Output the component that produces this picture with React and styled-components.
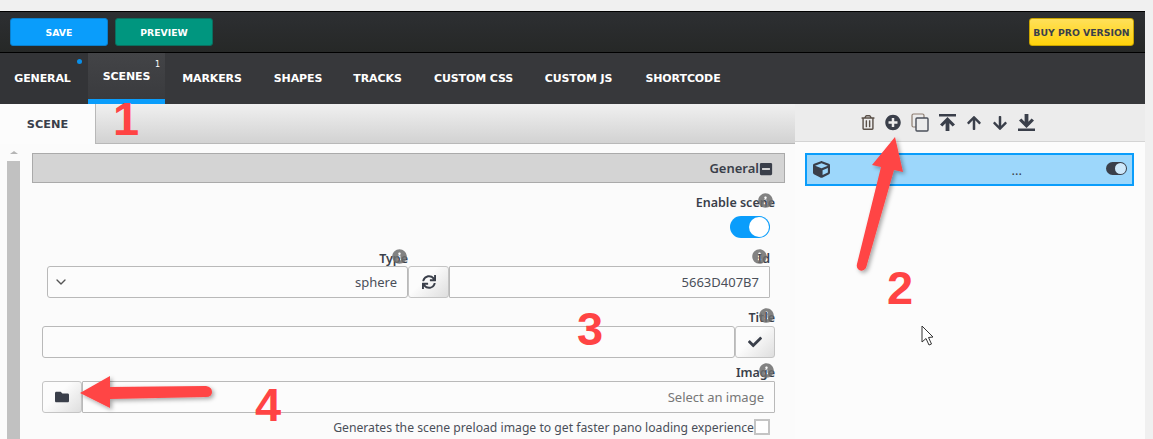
import React from "react";
import styled, { createGlobalStyle } from "styled-components";
import {
  FaRegTrashAlt,
  FaPlusCircle,
  FaArrowUp,
  FaArrowDown,
  FaCube,
  FaSync,
  FaCheck,
  FaFolder,
  FaInfoCircle,
  FaMinusSquare,
} from "react-icons/fa";
import { ChevronDown } from "lucide-react";

const Global = createGlobalStyle`
  html, body { margin: 0; padding: 0; background: #f0f0f0; height: 439px; overflow: hidden; }
  * { box-sizing: border-box; }
`;

const Page = styled.div`
  position: relative;
  width: 1153px;
  height: 439px;
  overflow: hidden;
  padding-top: 11px;
  font-family: "Noto Sans", sans-serif;
  color: #3a3f4a;
`;

const Frame = styled.div`
  width: 1145px;
`;

const TopBar = styled.div`
  height: 42px;
  display: flex;
  align-items: center;
  gap: 7px;
  padding: 0 11px 0 10px;
  background: linear-gradient(#2d2f32, #262827);
  border-top: 1px solid #000;
  border-bottom: 1px solid #000;
`;

const ActionButton = styled.div`
  width: ${(p) => p.$width || 98}px;
  height: 28px;
  display: flex;
  align-items: center;
  justify-content: center;
  border-radius: 3px;
  border: 1px solid ${(p) => p.$edge};
  background: ${(p) => p.$bg};
  color: ${(p) => p.$ink || "#fff"};
  font-family: "DejaVu Sans", sans-serif;
  font-weight: 700;
  font-size: 9.3px;
  margin-left: ${(p) => (p.$push ? "auto" : 0)};
`;

const Nav = styled.div`
  height: 51px;
  display: flex;
  background: #37383b;
`;

const NavTab = styled.div`
  position: relative;
  width: ${(p) => p.$width}px;
  height: 51px;
  padding-right: ${(p) => p.$shift || 0}px;
  display: flex;
  align-items: center;
  justify-content: center;
  color: #fff;
  font-family: "DejaVu Sans", sans-serif;
  font-weight: 700;
  font-size: 11px;
  letter-spacing: -0.1px;
  background: ${(p) => (p.$active ? "linear-gradient(#434447, #3a3b3e)" : p.$tone || "transparent")};
  border-bottom: ${(p) => (p.$active ? "5px solid #0a9dfb" : "none")};
`;

const Dot = styled.span`
  position: absolute;
  top: 6px;
  right: 6px;
  width: 5px;
  height: 5px;
  border-radius: 50%;
  background: #0a8fe8;
`;

const Count = styled.span`
  position: absolute;
  top: 7px;
  right: 5px;
  font-size: 8px;
  font-weight: 400;
`;

const Workspace = styled.div`
  display: flex;
  height: 335px;
`;

const LeftPane = styled.div`
  width: 795px;
  background: #fbfbfb;
`;

const TabRow = styled.div`
  height: 40px;
  display: flex;
`;

const SceneTab = styled.div`
  width: 96px;
  display: flex;
  align-items: center;
  justify-content: center;
  background: #fcfcfc;
  border-right: 1px solid #b8b8b8;
  font-family: "DejaVu Sans", sans-serif;
  font-weight: 700;
  font-size: 11.3px;
  color: #3a3f4a;
`;

const TabFiller = styled.div`
  flex: 1;
  background: linear-gradient(#f0f0f0, #d2d2d2);
  border-bottom: 1px solid #b8b8b8;
`;

const PaneBody = styled.div`
  display: flex;
  padding-left: 7px;
`;

const ScrollTrack = styled.div`
  width: 13px;
  flex: none;
  display: flex;
  flex-direction: column;
  align-items: center;
`;

const ScrollArrow = styled.div`
  height: 17px;
  padding-top: 7px;
  &::before {
    content: "";
    display: block;
    border-left: 4px solid transparent;
    border-right: 4px solid transparent;
    border-bottom: 3px solid #b5b5b5;
  }
`;

const ScrollThumb = styled.div`
  width: 13px;
  height: 280px;
  background: #c1c1c1;
`;

const FormColumn = styled.div`
  width: 753px;
  margin-left: 12px;
  padding-top: 9px;
`;

const SectionHead = styled.div`
  height: 30px;
  display: flex;
  align-items: center;
  justify-content: flex-end;
  padding-right: 11px;
  background: #d4d4d4;
  border: 1px solid #aaa;
  font-size: 13px;
  font-weight: 600;
  color: #3a3f4a;
  svg {
    width: 14px;
    height: 14px;
    color: #3a3f4a;
    margin-top: 1px;
  }
`;

const FieldLabel = styled.div`
  position: relative;
  height: ${(p) => p.$height || 20}px;
  padding-right: ${(p) => p.$inset || 0}px;
  text-align: right;
  font-size: 12.5px;
  font-weight: 600;
  line-height: 17px;
  color: #3a3f4a;
`;

const Info = styled(FaInfoCircle)`
  position: absolute;
  top: -1px;
  right: ${(p) => p.$right}px;
  width: 15px;
  height: 15px;
  color: #6e6e6e;
  opacity: 0.85;
`;

const EnableBlock = styled.div`
  padding: 11px 10px 0 0;
`;

const Toggle = styled.div`
  position: relative;
  width: 40px;
  height: 22px;
  margin: 5px 5px 0 auto;
  border-radius: 11px;
  background: #0a9dfb;
  &::after {
    content: "";
    position: absolute;
    top: 1px;
    right: 1px;
    width: 20px;
    height: 20px;
    border-radius: 50%;
    background: #fff;
  }
`;

const TwoCol = styled.div`
  display: grid;
  grid-template-columns: 402px 321px;
  margin: 12px 0 0 15px;
`;

const Row = styled.div`
  display: flex;
  height: 32px;
`;

const Control = styled.div`
  flex: 1;
  display: flex;
  align-items: center;
  justify-content: ${(p) => (p.$between ? "space-between" : "flex-end")};
  padding: 0 ${(p) => p.$end || 10}px 0 ${(p) => p.$start || 10}px;
  background: #fcfcfc;
  border: 1px solid #b9b9b9;
  border-radius: ${(p) => (p.$round ? 3 : 1)}px;
  font-size: 13px;
  color: ${(p) => p.$ink || "#4a4f59"};
  svg {
    color: #555;
  }
`;

const IconButton = styled.div`
  width: ${(p) => p.$width || 40}px;
  flex: none;
  display: flex;
  align-items: center;
  justify-content: center;
  background: linear-gradient(135deg, #fcfcfc 40%, #dedede);
  border: 1px solid #c4c4c4;
  border-radius: 3px;
  color: #3a3f4a;
  svg {
    width: 14px;
    height: 14px;
  }
`;

const FullRow = styled.div`
  margin: 0 10px;
`;

const TitleRow = styled(FullRow)`
  margin-top: 11px;
`;

const ImageRow = styled(FullRow)`
  margin-top: 6px;
`;

const Hint = styled.div`
  display: flex;
  justify-content: flex-end;
  align-items: center;
  height: 22px;
  margin-top: 3px;
  padding-right: 15px;
  font-size: 12.2px;
  color: #4a4f59;
`;

const Check = styled.span`
  width: 16px;
  height: 16px;
  background: #fff;
  border: 2px solid #c4c4c4;
`;

const RightPane = styled.div`
  flex: 1;
  background: #fcfcfc;
`;

const Tools = styled.div`
  height: 38px;
  display: flex;
  align-items: center;
  padding-left: 66px;
  gap: 10px;
  background: #ececec;
  border-bottom: 1px solid #d4d4d4;
  color: #3a3f4a;
`;

const ToolIcon = styled.span`
  display: flex;
  width: ${(p) => p.$w || 17}px;
  justify-content: center;
  color: ${(p) => p.$ink || "#3a3f4a"};
  svg {
    display: block;
  }
`;

const SceneItem = styled.div`
  height: 33px;
  margin: 11px 11px 0 10px;
  display: flex;
  align-items: center;
  padding: 0 5px 0 6px;
  background: #9dd7fb;
  border: 2px solid #0a9dfb;
  color: #3a3f4a;
  font-size: 13px;
`;

const Dots = styled.span`
  margin: 0 84px 0 auto;
`;

const MiniToggle = styled.div`
  position: relative;
  width: 21px;
  height: 13px;
  margin-top: -2px;
  border-radius: 7px;
  background: #3a3f4a;
  &::after {
    content: "";
    position: absolute;
    top: 1px;
    right: 1px;
    width: 11px;
    height: 11px;
    border-radius: 50%;
    background: #cfe9fb;
  }
`;

const Callout = styled.span`
  position: absolute;
  left: ${(p) => p.$x}px;
  top: ${(p) => p.$y}px;
  font-family: "Liberation Sans", sans-serif;
  font-weight: 700;
  font-size: 47px;
  line-height: 47px;
  color: #ff4444;
`;

const Overlay = styled.svg`
  position: absolute;
  left: 0;
  top: 0;
  pointer-events: none;
`;

const CopyIcon = () => (
  <svg width="18" height="19" viewBox="0 0 18 19" fill="none">
    <rect x="1" y="1" width="12" height="13" rx="1.5" stroke="#8d7d70" strokeWidth="1.2" />
    <rect x="5" y="5" width="12" height="13" rx="1" fill="#ececec" stroke="#4a4f59" strokeWidth="1.4" />
  </svg>
);

const ToTopIcon = () => (
  <svg width="17" height="17" viewBox="0 0 17 17" fill="#3a3f4a">
    <rect x="0" y="0" width="17" height="2.5" />
    <path d="M8.5 3 L16 10.5 L13.6 12.6 L10.4 9.3 V17 H6.6 V9.3 L3.4 12.6 L1 10.5 Z" />
  </svg>
);

const ToBottomIcon = () => (
  <svg width="17" height="17" viewBox="0 0 17 17" fill="#3a3f4a">
    <rect x="0" y="14.5" width="17" height="2.5" />
    <path d="M8.5 14 L16 6.5 L13.6 4.4 L10.4 7.7 V0 H6.6 V7.7 L3.4 4.4 L1 6.5 Z" />
  </svg>
);

const tabs = [
  { label: "GENERAL", width: 88, shift: 3, tone: "#333437", dot: true },
  { label: "SCENES", width: 77, active: true, count: 1 },
  { label: "MARKERS", width: 94 },
  { label: "SHAPES", width: 78 },
  { label: "TRACKS", width: 81 },
  { label: "CUSTOM CSS", width: 111 },
  { label: "CUSTOM JS", width: 99 },
  { label: "SHORTCODE", width: 110 },
];

export default function App() {
  return (
    <Page>
      <Global />
      <Frame>
        <TopBar>
          <ActionButton $bg="#0a9dfb" $edge="#0b7fcc">SAVE</ActionButton>
          <ActionButton $bg="#00967f" $edge="#0a6f5f">PREVIEW</ActionButton>
          <ActionButton $push $width={105} $bg="linear-gradient(#ffe05a, #ffd20a)" $edge="#c9a400" $ink="#3a3f4a">
            BUY PRO VERSION
          </ActionButton>
        </TopBar>
        <Nav>
          {tabs.map((t) => (
            <NavTab key={t.label} $width={t.width} $shift={t.shift} $active={t.active} $tone={t.tone}>
              {t.label}
              {t.dot && <Dot />}
              {t.count && <Count>{t.count}</Count>}
            </NavTab>
          ))}
        </Nav>
        <Workspace>
          <LeftPane>
            <TabRow>
              <SceneTab>SCENE</SceneTab>
              <TabFiller />
            </TabRow>
            <PaneBody>
              <ScrollTrack>
                <ScrollArrow />
                <ScrollThumb />
              </ScrollTrack>
              <FormColumn>
                <SectionHead>
                  General
                  <FaMinusSquare />
                </SectionHead>
                <EnableBlock>
                  <FieldLabel $height={17}>
                    Enable scene
                    <Info $right={2} />
                  </FieldLabel>
                  <Toggle />
                </EnableBlock>
                <TwoCol>
                  <FieldLabel $height={16} $inset={41}>
                    Type
                    <Info $right={42} />
                  </FieldLabel>
                  <FieldLabel $height={16}>
                    Id
                    <Info $right={3} />
                  </FieldLabel>
                  <Row>
                    <Control $round $between $start={5} $end={10}>
                      <ChevronDown size={16} strokeWidth={2} />
                      sphere
                    </Control>
                    <IconButton $width={41}>
                      <FaSync />
                    </IconButton>
                  </Row>
                  <Row>
                    <Control>5663D407B7</Control>
                  </Row>
                </TwoCol>
                <TitleRow>
                  <FieldLabel $height={17}>
                    Title
                    <Info $right={1} />
                  </FieldLabel>
                  <Row>
                    <Control $round />
                    <IconButton $width={40}>
                      <FaCheck />
                    </IconButton>
                  </Row>
                </TitleRow>
                <ImageRow>
                  <FieldLabel $height={17}>
                    Image
                    <Info $right={1} />
                  </FieldLabel>
                  <Row>
                    <IconButton $width={40}>
                      <FaFolder />
                    </IconButton>
                    <Control $ink="#777" $end={10}>Select an image</Control>
                  </Row>
                </ImageRow>
                <Hint>
                  Generates the scene preload image to get faster pano loading experience
                  <Check />
                </Hint>
              </FormColumn>
            </PaneBody>
          </LeftPane>
          <RightPane>
            <Tools>
              <ToolIcon $w={14} $ink="#5a5048"><FaRegTrashAlt size={15} /></ToolIcon>
              <ToolIcon $w={16}><FaPlusCircle size={17} /></ToolIcon>
              <ToolIcon $w={18}><CopyIcon /></ToolIcon>
              <ToolIcon><ToTopIcon /></ToolIcon>
              <ToolIcon $w={16}><FaArrowUp size={16} /></ToolIcon>
              <ToolIcon $w={16}><FaArrowDown size={16} /></ToolIcon>
              <ToolIcon><ToBottomIcon /></ToolIcon>
            </Tools>
            <SceneItem>
              <FaCube size={17} />
              <Dots>...</Dots>
              <MiniToggle />
            </SceneItem>
          </RightPane>
        </Workspace>
      </Frame>

      <Callout $x={113} $y={95}>1</Callout>
      <Callout $x={887} $y={264}>2</Callout>
      <Callout $x={577} $y={305}>3</Callout>
      <Callout $x={255} $y={381}>4</Callout>

      <Overlay width="1153" height="439" viewBox="0 0 1153 439">
        <defs>
          <filter id="soft" x="-30%" y="-30%" width="160%" height="160%">
            <feDropShadow dx="2" dy="2" stdDeviation="2" floodColor="#000" floodOpacity="0.35" />
          </filter>
        </defs>
        <g fill="#ff4444" filter="url(#soft)">
          <path d="M895 137 L903 172 L894 170 L866 268 Q863 272 859 270 Q856 268 857 264 L881 167 L872 165 Z" />
          <path d="M80 393 L110 376 L110 387 L206 386 Q212 387 212 392 Q212 397 206 397 L110 399 L110 408 Z" />
        </g>
      </Overlay>

      {/* mouse pointer */}
      <Overlay width="1153" height="439" viewBox="0 0 1153 439">
        <path
          d="M922 326 L922 342 L926 338.5 L929 345 L931.5 344 L928.5 337.5 L933 337 Z"
          fill="#fff"
          stroke="#333"
          strokeWidth="1"
        />
      </Overlay>
    </Page>
  );
}
